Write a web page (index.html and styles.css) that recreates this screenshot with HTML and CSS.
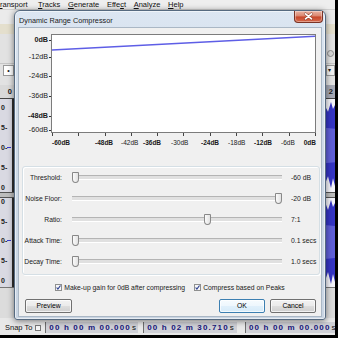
FILE: index.html
```html
<!DOCTYPE html>
<html>
<head>
<meta charset="utf-8">
<link rel="stylesheet" href="styles.css">
</head>
<body>
<div class="app">
  <div class="menubar">
    <span class="m-first"><u>r</u>ansport</span><span><u>T</u>racks</span><span><u>G</u>enerate</span><span>Effe<u>c</u>t</span><span><u>A</u>nalyze</span><span><u>H</u>elp</span>
  </div>
  <div class="toolbars">
    <div class="tb tb-a"></div>
    <div class="tb tb-b"></div>
    <div class="tb tb-c"><span class="tb-ring"></span></div>
    <div class="tb tb-f"><span class="tb-box">•</span><span class="tb-drop">▾</span></div>
    <div class="tb tb-g"></div>
  </div>
  <div class="timeline"><span class="tl-left">0</span><span class="tl-main">2</span></div>
  <div class="track t1">
    <div class="vruler"><span>0</span><span>5-</span><span>0-<i class="zero"></i></span><span>5-</span><span>0</span></div>
    <div class="vline"></div>
    <div class="wave">
      <svg viewBox="0 0 321 94" preserveAspectRatio="none"><polygon class="peak" points="250,30 262,14 268,22 274,8 280,18 286,6 291,16 296,5 300,12 304,4 308,15 311,7 314,13 317,3 319,10 321,6 321,88 319,80 317,90 314,78 311,86 308,76 304,89 300,80 296,88 291,77 286,87 280,76 274,84 268,72 262,80 250,64"/><polygon class="rms" points="262,36 280,30 300,28 321,30 321,64 300,66 280,62 262,58"/></svg>
    </div>
  </div>
  <div class="track-sep"></div>
  <div class="track t2">
    <div class="vruler"><span>0</span><span>5-</span><span>0-<i class="zero"></i></span><span>5-</span><span>0</span></div>
    <div class="vline"></div>
    <div class="wave">
      <svg viewBox="0 0 321 89" preserveAspectRatio="none"><polygon class="peak" points="250,28 262,12 268,20 274,6 280,15 286,4 291,13 296,3 300,10 304,5 308,13 311,4 314,12 317,2 319,9 321,5 321,84 319,76 317,86 314,74 311,83 308,72 304,85 300,76 296,84 291,73 286,83 280,72 274,80 268,68 262,76 250,60"/><polygon class="rms" points="262,34 280,28 300,26 321,28 321,60 300,62 280,58 262,54"/></svg>
    </div>
  </div>
  <div class="below"></div>
  <div class="statusbar">
    <span class="snap">Snap To</span>
    <span class="snapbox"></span>
    <span class="timebox tb1">00 h 00 m 00.000 <em>s</em></span>
    <span class="timebox tb2">00 h 02 m 30.710 <em>s</em></span>
    <span class="timebox tb3">00 h 00 m 00.000 <em>s</em></span>
  </div>
</div>

<div class="dialog">
  <div class="titlebar">
    <span class="title">Dynamic Range Compressor</span>
    <span class="close"><svg width="27" height="11" viewBox="0 0 27 11"><path class="xs" d="M10.5 2.8 L16.5 7.8 M16.5 2.8 L10.5 7.8"/><path class="xw" d="M10.5 2.8 L16.5 7.8 M16.5 2.8 L10.5 7.8"/></svg></span>
  </div>
  <div class="client">
    <div class="plot-row">
      <div class="yaxis">
        <span class="ylab major" style="top:2px">0dB</span>
        <span class="ylab" style="top:19px">-12dB</span>
        <span class="ylab" style="top:38px">-24dB</span>
        <span class="ylab" style="top:58px">-36dB</span>
        <span class="ylab major" style="top:78px">-48dB</span>
        <span class="ylab" style="top:92px">-60dB</span>
      </div>
      <div class="graph">
        <svg class="curve" viewBox="0 0 263 97" preserveAspectRatio="none"><line x1="0" y1="15" x2="263" y2="1.2"/></svg>
      </div>
    </div>
    <div class="xaxis">
      <div class="xticks"><i></i><i></i><i></i><i></i><i></i><i></i><i></i><i></i><i></i><i></i><i></i></div>
      <span class="xlab major" style="left:1px">-60dB</span>
      <span class="xlab major" style="left:44px">-48dB</span>
      <span class="xlab" style="left:70px">-42dB</span>
      <span class="xlab major" style="left:92px">-36dB</span>
      <span class="xlab" style="left:120px">-30dB</span>
      <span class="xlab major" style="left:150px">-24dB</span>
      <span class="xlab" style="left:177px">-18dB</span>
      <span class="xlab major" style="left:203px">-12dB</span>
      <span class="xlab" style="left:230px">-6dB</span>
      <span class="xlab major" style="right:0">0dB</span>
    </div>
    <div class="group">
      <div class="srow"><span class="slabel">Threshold:</span><span class="slider"><span class="range"><span class="thumb" style="left:0%"></span></span></span><span class="sval">-60 dB</span></div>
      <div class="srow"><span class="slabel">Noise Floor:</span><span class="slider"><span class="range"><span class="thumb" style="left:100%"></span></span></span><span class="sval">-20 dB</span></div>
      <div class="srow"><span class="slabel">Ratio:</span><span class="slider"><span class="range"><span class="thumb" style="left:65%"></span></span></span><span class="sval">7:1</span></div>
      <div class="srow"><span class="slabel">Attack Time:</span><span class="slider"><span class="range"><span class="thumb" style="left:0%"></span></span></span><span class="sval">0.1 secs</span></div>
      <div class="srow"><span class="slabel">Decay Time:</span><span class="slider"><span class="range"><span class="thumb" style="left:0%"></span></span></span><span class="sval">1.0 secs</span></div>
    </div>
    <div class="checks">
      <span class="check"><svg class="cb" width="7" height="7" viewBox="0 0 7 7"><rect x="0.5" y="0.5" width="6" height="6"/><path d="M1.6 3.5 L2.9 5.1 L5.5 1.5"/></svg><span>Make-up gain for 0dB after compressing</span></span>
      <span class="check"><svg class="cb" width="7" height="7" viewBox="0 0 7 7"><rect x="0.5" y="0.5" width="6" height="6"/><path d="M1.6 3.5 L2.9 5.1 L5.5 1.5"/></svg><span>Compress based on Peaks</span></span>
    </div>
    <div class="buttons">
      <button class="btn preview">Preview</button>
      <button class="btn default">OK</button>
      <button class="btn">Cancel</button>
    </div>
  </div>
</div>
</body>
</html>
```

FILE: styles.css
```css
* { box-sizing: border-box; margin: 0; padding: 0; }
html, body { width: 338px; height: 338px; overflow: hidden; }
body { font-family: "Liberation Sans", Arial, sans-serif; background: #000; position: relative; color: #1a1a1a; }

/* ---------- background application ---------- */
.app {
  width: 338px; height: 338px;
  border-right: 3px solid #000; border-bottom: 3px solid #000;
  display: flex; flex-direction: column;
  background: #e4e4e4;
}
.menubar {
  height: 9px; flex-shrink: 0;
  display: flex; gap: 7.7px;
  background: #eeeeee;
  font-size: 7.5px; line-height: 9px; color: #111;
  white-space: nowrap; overflow: hidden;
}
.menubar u { text-decoration-thickness: 0.6px; text-underline-offset: 1px; }
.m-first { margin-right: 2.8px; }

.toolbars { height: 76px; flex-shrink: 0; display: flex; flex-direction: column; }
.tb { display: flex; justify-content: space-between; align-items: center; }
.tb-a { height: 15px; background: #ebebeb; border-top: 1px solid #d2d2d2; }
.tb-b { height: 10px; background: #e4dfcd; }
.tb-c { height: 30px; background: #e2e2e2; border-bottom: 1px solid #c6c6c6; justify-content: flex-end; align-items: flex-end; padding: 0 1px 6px 0; }
.tb-ring { width: 7px; height: 7px; border: 1px solid #8d8d8d; border-radius: 50%; background: #d6d6d6; }
.tb-f { height: 12px; background: #e2e2e2; }
.tb-box { width: 11px; height: 11px; margin-left: 3px; background: #fff; border: 1px solid #9a9a9a; font-size: 7px; line-height: 9px; text-align: center; }
.tb-drop { width: 9px; height: 11px; border: 1px solid #9a9a9a; background: #f2f2f2; font-size: 6px; line-height: 9px; padding-left: 1px; }
.tb-g { height: 9px; background: #e2e2e2; }

.timeline { height: 13px; flex-shrink: 0; display: flex; font-size: 7.5px; font-weight: bold; line-height: 13px; }
.tl-left { width: 14px; background: #d9d9d9; text-align: right; padding-right: 2px; }
.tl-main { flex: 1; background: #a6a9b5; text-align: right; padding-right: 2px; color: #222; }

.track { display: flex; flex-shrink: 0; }
.t1 { height: 94px; border-top: 1px solid #454545; }
.t2 { height: 89px; }
.vruler {
  width: 12px; background: #d9d9e2;
  display: flex; flex-direction: column; justify-content: space-between;
  font-size: 7px; line-height: 7px; font-weight: bold; color: #222; padding-left: 1px;
}
.t1 .vruler { padding-top: 4.5px; padding-bottom: 1.5px; }
.t2 .vruler { padding-top: 0; padding-bottom: 3.5px; }
.vruler span { display: flex; align-items: center; white-space: nowrap; }
.zero { display: inline-block; width: 4px; height: 1px; background: #3a3ad0; }
.vline { width: 2px; background: #2e2e2e; }
.wave { flex: 1; background: #f4f4fa; }
.wave svg { display: block; width: 100%; height: 100%; }
.peak { fill: #3535c4; }
.rms { fill: #5f5fd8; }
.track-sep { height: 6px; flex-shrink: 0; background: #bdbdbd; border-top: 1px solid #555; border-bottom: 1px solid #555; }
.below { height: 31px; flex-shrink: 0; background: #dcdcdc; border-top: 1px solid #777; }
.statusbar {
  height: 17px; flex-shrink: 0; background: #e8e8e8;
  display: flex; align-items: center; padding: 2px 0 0 5px;
  font-size: 7.5px; white-space: nowrap; overflow: hidden;
}
.snap { color: #111; }
.snapbox { width: 6px; height: 6px; border: 1px solid #777; background: #f6f6f6; margin-left: 3px; }
.timebox {
  height: 11px; display: flex; align-items: center;
  background: #cfd0d6; border-left: 1px solid #6e6e6e;
  font-size: 8px; font-weight: bold; color: #17177a; letter-spacing: 1.15px; padding-left: 3px;
}
.timebox em { font-style: normal; font-weight: normal; color: #111; letter-spacing: 0; margin-left: 1px; }
.tb1 { margin-left: 4px; width: 94px; }
.tb2 { margin-left: 5px; width: 95px; }
.tb3 { margin-left: 8px; width: 90px; }

/* ---------- dialog window ---------- */
.dialog {
  position: absolute; left: 14px; top: 10px;
  width: 312px; height: 310px;
  border: 1px solid #566a80; border-radius: 6px 6px 3px 3px;
  background: linear-gradient(#dce6f2, #cfdbe8 35%, #c9d5e3);
  box-shadow: 0 1px 6px rgba(0,0,0,.5), inset 0 0 0 1px rgba(255,255,255,.55);
  display: flex; flex-direction: column;
  padding: 0 3px 2px;
}
.titlebar { height: 16px; flex-shrink: 0; display: flex; align-items: flex-start; margin-right: -3px; }
.title { font-size: 7.3px; line-height: 9px; padding: 4.5px 0 0 1px; color: #1b1b1b; white-space: nowrap; }
.close {
  margin-left: auto; margin-right: 2px;
  width: 29px; height: 12px;
  border: 1px solid #7a3325; border-top: none; border-radius: 0 0 4px 4px;
  background: linear-gradient(#eab3a3 0%, #dc8a74 42%, #c8482c 55%, #d66a4c 100%);
  box-shadow: inset 0 0 0 1px rgba(255,255,255,.35);
}
.close svg { display: block; }
.close .xs { stroke: #6a2a1c; stroke-width: 2.8; stroke-linecap: round; fill: none; opacity: .6; }
.close .xw { stroke: #fff; stroke-width: 1.7; stroke-linecap: round; fill: none; }

.client {
  flex: 1; background: #f0f0f0;
  border: 1px solid #aab7c5;
  display: flex; flex-direction: column;
  padding: 6px 0 3px;
  font-size: 6.8px;
}
.plot-row { height: 99px; flex-shrink: 0; display: flex; }
.yaxis { width: 32px; position: relative; }
.ylab {
  position: absolute; right: 0;
  display: flex; align-items: center;
  font-size: 7.2px; line-height: 8px; color: #1a1a1a; white-space: nowrap;
}
.ylab::after { content: ""; width: 2px; height: 1px; background: #333; margin-left: 1px; }
.ylab.major { font-weight: bold; }
.graph { width: 265px; border: 1px solid #7c7c7c; background: #fff; }
.curve { display: block; width: 100%; height: 100%; }
.curve line { stroke: #5e5ee6; stroke-width: 1.6; }

.xaxis { position: relative; height: 17px; width: 265px; margin-left: 32px; flex-shrink: 0; }
.xticks { display: flex; justify-content: space-between; padding-left: 1px; height: 3px; }
.xticks i { width: 1px; height: 3px; background: #444; }
.xlab { position: absolute; top: 5px; font-size: 6.5px; line-height: 9px; color: #1a1a1a; white-space: nowrap; }
.xlab.major { font-weight: bold; }

.group {
  margin: 16px 1px 0 3px; height: 109px; flex-shrink: 0;
  border: 1px solid #d5dfe5; border-radius: 3px;
  box-shadow: inset 1px 1px 0 #fff, 1px 1px 0 #fff;
  padding-bottom: 2px;
}
.srow { height: 21px; display: flex; align-items: center; }
.slabel { width: 39px; text-align: right; white-space: nowrap; color: #1a1a1a; }
.slider { margin-left: 10px; width: 210px; height: 11px; position: relative; }
.slider::before {
  content: ""; position: absolute; left: 0; right: 0; top: 3px; height: 3px;
  border-top: 1px solid #b4b4b4; background: #e0e0e0; border-bottom: 1px solid #fff;
}
.range { position: absolute; left: 0; right: 7px; top: 0; bottom: 0; }
.thumb {
  position: absolute; top: 0; width: 7px; height: 11px;
  border: 1px solid #888; border-radius: 1px 1px 3.5px 3.5px / 1px 1px 4px 4px;
  background: linear-gradient(90deg, #fbfbfb, #e2e2e2);
}
.sval { margin-left: 9px; white-space: nowrap; color: #1a1a1a; }

.checks { margin-top: 6px; height: 12px; flex-shrink: 0; display: flex; justify-content: center; align-items: center; gap: 9px; }
.check { display: flex; align-items: center; gap: 2px; white-space: nowrap; color: #1a1a1a; }
.cb { display: block; }
.cb rect { fill: #f6f6f6; stroke: #8e8f8f; stroke-width: 1; }
.cb path { fill: none; stroke: #2b3f8f; stroke-width: 1.1; }

.buttons { margin-top: 6px; height: 14px; flex-shrink: 0; display: flex; gap: 5px; padding: 0 5px 0 6px; }
.btn {
  height: 14px; width: 46px;
  border: 1px solid #707070; border-radius: 2px;
  background: linear-gradient(#f2f2f2 0%, #ebebeb 48%, #dddddd 52%, #cfcfcf 100%);
  box-shadow: inset 0 0 0 1px rgba(255,255,255,.7);
  font-family: inherit; font-size: 6.8px; color: #000; line-height: 12px;
}
.preview { width: 47px; margin-right: auto; }
.default {
  border-color: #3c7fb1;
  background: linear-gradient(#f6fbfe 0%, #eef7fd 48%, #e0f0fb 52%, #d6ebf9 100%);
}
```
